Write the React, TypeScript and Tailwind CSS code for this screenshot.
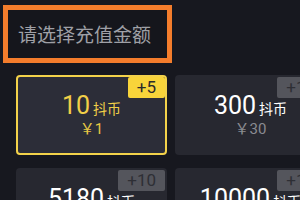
import React from 'react';

interface Pack {
  coins: string;
  price: string;
  bonus: string;
}

const packs: Pack[] = [
  { coins: '10', price: '￥1', bonus: '+5' },
  { coins: '300', price: '￥30', bonus: '+15' },
  { coins: '5180', price: '￥518', bonus: '+10' },
  { coins: '10000', price: '￥1000', bonus: '+10' },
];

const CoinCard: React.FC<{ pack: Pack; active?: boolean }> = ({ pack, active }) => (
  <div
    className={`relative h-[80px] w-[151px] shrink-0 rounded-[4px] border-2 flex flex-col items-center justify-center ${
      active ? 'border-[#f3d24a] bg-[#2c2d38]' : 'border-transparent bg-[#272830]'
    }`}
  >
    <span
      className={`absolute top-0 right-0 h-[21px] px-[9px] text-[17px] leading-[21px] rounded-[2px] ${
        active ? 'bg-[#f8d43a] text-[#2a2a2a]' : 'bg-[#54555c] text-[#2e2f35]'
      }`}
    >
      {pack.bonus}
    </span>
    <div className="flex items-baseline mt-[1px]">
      <span className={`text-[25px] leading-[28px] ${active ? 'text-[#f1cf48]' : 'text-white'}`}>
        {pack.coins}
      </span>
      <span className={`ml-[3px] text-[14px] ${active ? 'text-[#f1cf48]' : 'text-white'}`}>抖币</span>
    </div>
    <span className={`text-[15px] leading-[19px] ${active ? 'text-[#e8c844]' : 'text-[#8a8b91]'}`}>
      {pack.price}
    </span>
  </div>
);

export default function App() {
  return (
    <div
      className="w-[300px] h-[200px] overflow-hidden bg-[#17181f]"
      style={{ fontFamily: "Roboto, 'Noto Sans CJK SC', sans-serif" }}
    >
      <div className="pt-[5px] pl-[3px]">
        <div className="w-[169px] h-[58px] border-[5px] border-[#f47d2c] bg-[#15161c] flex items-center pl-[10px] pt-[5px]">
          <span className="text-[19px] text-[#9fa0a6]">请选择充值金额</span>
        </div>
      </div>

      <div className="grid grid-cols-[151px_151px] gap-x-[8px] gap-y-[13px] pl-[16px] pt-[12px]">
        {packs.map((p, i) => (
          <CoinCard key={p.coins} pack={p} active={i === 0} />
        ))}
      </div>
    </div>
  );
}
